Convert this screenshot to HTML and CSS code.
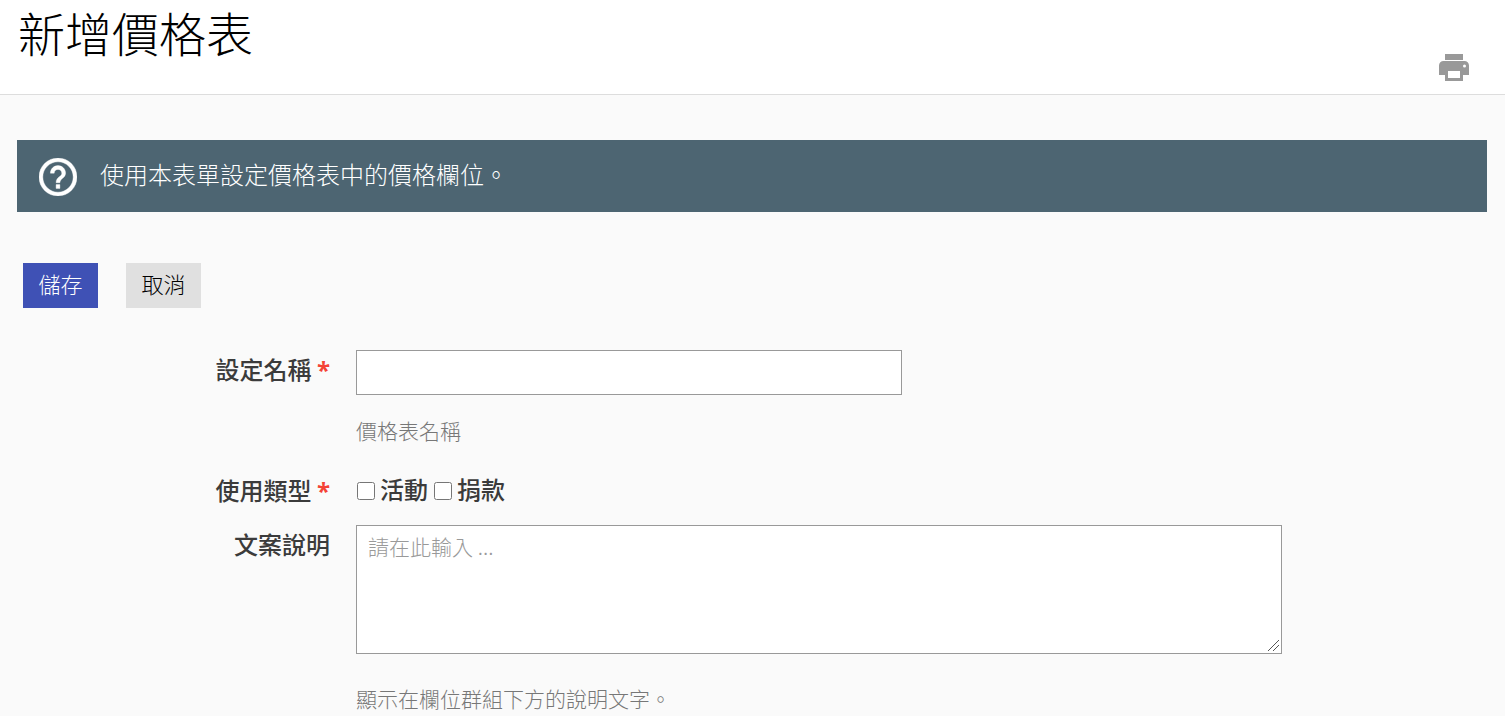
FILE: index.html
```html
<!DOCTYPE html>
<html lang="zh-Hant">
<head>
    <meta charset="UTF-8">
    <meta name="viewport" content="width=device-width, initial-scale=1.0">
    <title>新增價格表</title>
    <link rel="stylesheet" href="styles.css">
</head>
<body>
    <header class="page-header">
        <h1>新增價格表</h1>
        <button type="button" class="print-btn" aria-label="列印">
            <svg viewBox="0 0 30 27" width="30" height="27" aria-hidden="true">
                <path fill="#999" d="M6 0h18v6H6zM4.500 7h21a4.500 4.500 0 0 1 4.500 4.500V21h-6v6H6v-6H0v-9.500A4.500 4.500 0 0 1 4.500 7zM9 17v7h12V17zM25.500 10.500a1.500 1.500 0 1 0 0 3 1.500 1.500 0 0 0 0-3z" fill-rule="evenodd"/>
            </svg>
        </button>
    </header>

    <main>
        <div class="help">
            <svg class="help-icon" viewBox="2 2 20 20" width="38" height="38" aria-hidden="true">
                <path fill="#fff" stroke="#fff" stroke-width=".2" d="M11 18h2v-2h-2v2zm1-16C6.480 2 2 6.480 2 12s4.480 10 10 10 10-4.480 10-10S17.520 2 12 2zm0 18c-4.410 0-8-3.590-8-8s3.590-8 8-8 8 3.590 8 8-3.590 8-8 8zm0-14c-2.210 0-4 1.790-4 4h2c0-1.100.9-2 2-2s2 .9 2 2c0 2-3 1.750-3 5h2c0-2.250 3-2.500 3-5 0-2.210-1.790-4-4-4z"/>
            </svg>
            <p>使用本表單設定價格表中的價格欄位。</p>
        </div>

        <form>
            <div class="buttons">
                <button type="submit" class="btn btn-save">儲存</button>
                <button type="button" class="btn">取消</button>
            </div>

            <div class="row">
                <label class="label" for="title">設定名稱 <span class="required">*</span></label>
                <div class="field">
                    <input type="text" id="title" required>
                    <p class="description">價格表名稱</p>
                </div>
            </div>

            <div class="row row-types" role="group" aria-labelledby="types-label">
                <span class="label" id="types-label">使用類型 <span class="required">*</span></span>
                <div class="field checks">
                    <input type="checkbox" id="type-event">
                    <label for="type-event">活動</label>
                    <input type="checkbox" id="type-contribution">
                    <label for="type-contribution">捐款</label>
                </div>
            </div>

            <div class="row">
                <label class="label" for="help-pre">文案說明</label>
                <div class="field">
                    <textarea id="help-pre" placeholder="請在此輸入 ..."></textarea>
                    <p class="description">顯示在欄位群組下方的說明文字。</p>
                </div>
            </div>
        </form>
    </main>
</body>
</html>
```

FILE: styles.css
```css
* {
    box-sizing: border-box;
}
body {
    margin: 0;
    background: #fafafa;
    color: #000;
    font-family: "Noto Sans CJK TC", sans-serif;
    font-weight: 300;
    font-size: 24px;
    line-height: 32px;
}
h1, p {
    margin: 0;
}
.page-header {
    display: flex;
    justify-content: space-between;
    align-items: flex-end;
    height: 95px;
    padding: 0 36px 13px 18px;
    background: #fff;
    border-bottom: 1px solid #ddd;
}
h1 {
    align-self: flex-start;
    font-size: 47px;
    font-weight: 300;
    line-height: 64px;
}
.print-btn {
    padding: 0;
    border: 0;
    background: none;
    cursor: pointer;
}
.print-btn svg {
    display: block;
}
main {
    padding: 45px 18px 0 17px;
}
.help {
    display: flex;
    align-items: flex-start;
    gap: 23px;
    min-height: 72px;
    padding: 18px 22px 16px;
    background: #4d6572;
    color: #fff;
}
.buttons {
    display: flex;
    gap: 28px;
    margin: 51px 6px 42px;
}
.btn {
    min-width: 75px;
    height: 45px;
    padding: 0 15px 5px;
    border: 0;
    background: #e0e0e0;
    color: #000;
    font: inherit;
    font-size: 22px;
    cursor: pointer;
}
.btn-save {
    background: #3f51b5;
    color: #fff;
}
.row {
    display: flex;
    gap: 26px;
}
.label {
    flex: 0 0 313px;
    padding-top: 3px;
    text-align: right;
}
.label, .checks {
    color: #3b3b3b;
    font-weight: 500;
}
.required {
    color: #f44336;
    font-family: "Open Sans", sans-serif;
    font-weight: 700;
}
.field {
    flex: 1;
}
input[type="text"], textarea {
    display: block;
    width: 100%;
    border: 1px solid #999;
    background: #fff;
    font: inherit;
    font-size: 21px;
}
input[type="text"] {
    max-width: 546px;
    height: 45px;
    padding: 0 12px;
}
textarea {
    max-width: 926px;
    height: 129px;
    padding: 4px 11px;
    resize: vertical;
}
textarea::placeholder {
    color: #999;
}
textarea::-webkit-resizer {
    background: linear-gradient(135deg, transparent 51%, #555 51%, #555 57%, transparent 57%, transparent 72%, #555 72%, #555 78%, transparent 78%) 1px 1px / 12px 12px no-repeat;
}
.description {
    margin-top: 19px;
    color: #777;
    font-size: 21px;
}
textarea + .description {
    margin-top: 28px;
}
.row-types {
    margin: 25px 0 18px;
}
.checks {
    display: flex;
    align-items: flex-start;
    gap: 5px;
    padding-top: 2px;
}
.checks input {
    width: 18px;
    height: 18px;
    margin: 9px 0 0 1px;
}
```
